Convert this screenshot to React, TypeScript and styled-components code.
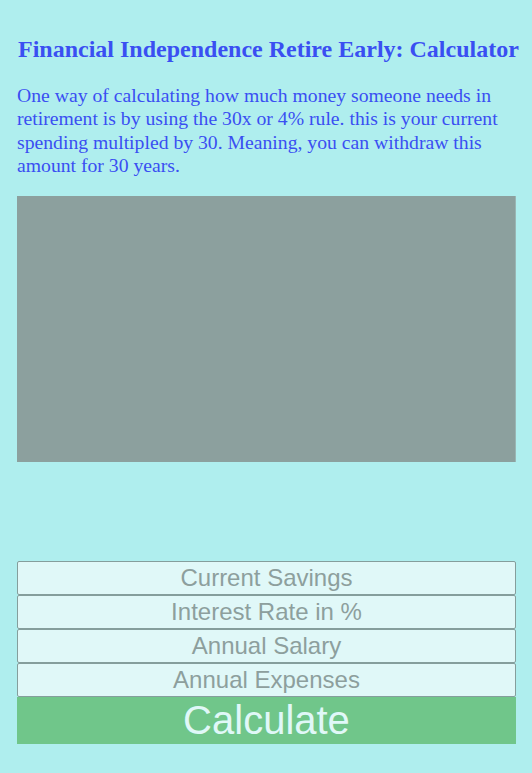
import React from "react";
import styled, { createGlobalStyle } from "styled-components";

const Global = createGlobalStyle`
  html, body {
    margin: 0;
    padding: 0;
    background: #afeeee;
  }
`;

const Page = styled.div`
  padding: 0 16px 0 17px;
  display: flex;
  flex-direction: column;
`;

const Title = styled.h1`
  font-family: "Liberation Serif", "Times New Roman", serif;
  font-weight: bold;
  font-size: 24px;
  line-height: 28px;
  color: #3a4ff2;
  margin: 35px 0 0 1px;
  white-space: nowrap;
`;

const Intro = styled.p`
  font-family: "Liberation Serif", "Times New Roman", serif;
  font-size: 19.7px;
  line-height: 23.3px;
  color: #3a4ff2;
  margin: 21px 0 0 0;
`;

const ChartArea = styled.div`
  margin-top: 19px;
  height: 266px;
  background: #8ca09e;
  border-right: 1px solid #9ab6b4;
`;

const Form = styled.form`
  margin-top: 99px;
  display: flex;
  flex-direction: column;
`;

const Field = styled.input`
  box-sizing: border-box;
  height: 34px;
  width: 100%;
  margin: 0;
  padding: 0;
  background: #e0f8f8;
  border: 1px solid #859e9c;
  border-radius: 2px;
  font-family: "Liberation Sans", Arial, sans-serif;
  font-size: 24px;
  color: #8a9e9c;
  text-align: center;
  outline: none;
  &::placeholder {
    color: #8d9f9d;
    opacity: 1;
  }
`;

const CalcButton = styled.button`
  box-sizing: border-box;
  height: 47px;
  width: 100%;
  margin: 0;
  padding: 0;
  border: none;
  background: #70c68a;
  color: #e0f8f8;
  font-family: "Liberation Sans", Arial, sans-serif;
  font-size: 40px;
  line-height: 47px;
  cursor: pointer;
`;

const fields = ["Current Savings", "Interest Rate in %", "Annual Salary", "Annual Expenses"];

export default function App() {
  return (
    <>
      <Global />
      <Page>
        <Title>Financial Independence Retire Early: Calculator</Title>
        <Intro>
          One way of calculating how much money someone needs in retirement is by using the 30x or 4% rule. this is
          your current spending multipled by 30. Meaning, you can withdraw this amount for 30 years.
        </Intro>
        <ChartArea />
        <Form onSubmit={(e) => e.preventDefault()}>
          {fields.map((f) => (
            <Field key={f} placeholder={f} />
          ))}
          <CalcButton type="submit">Calculate</CalcButton>
        </Form>
      </Page>
    </>
  );
}
